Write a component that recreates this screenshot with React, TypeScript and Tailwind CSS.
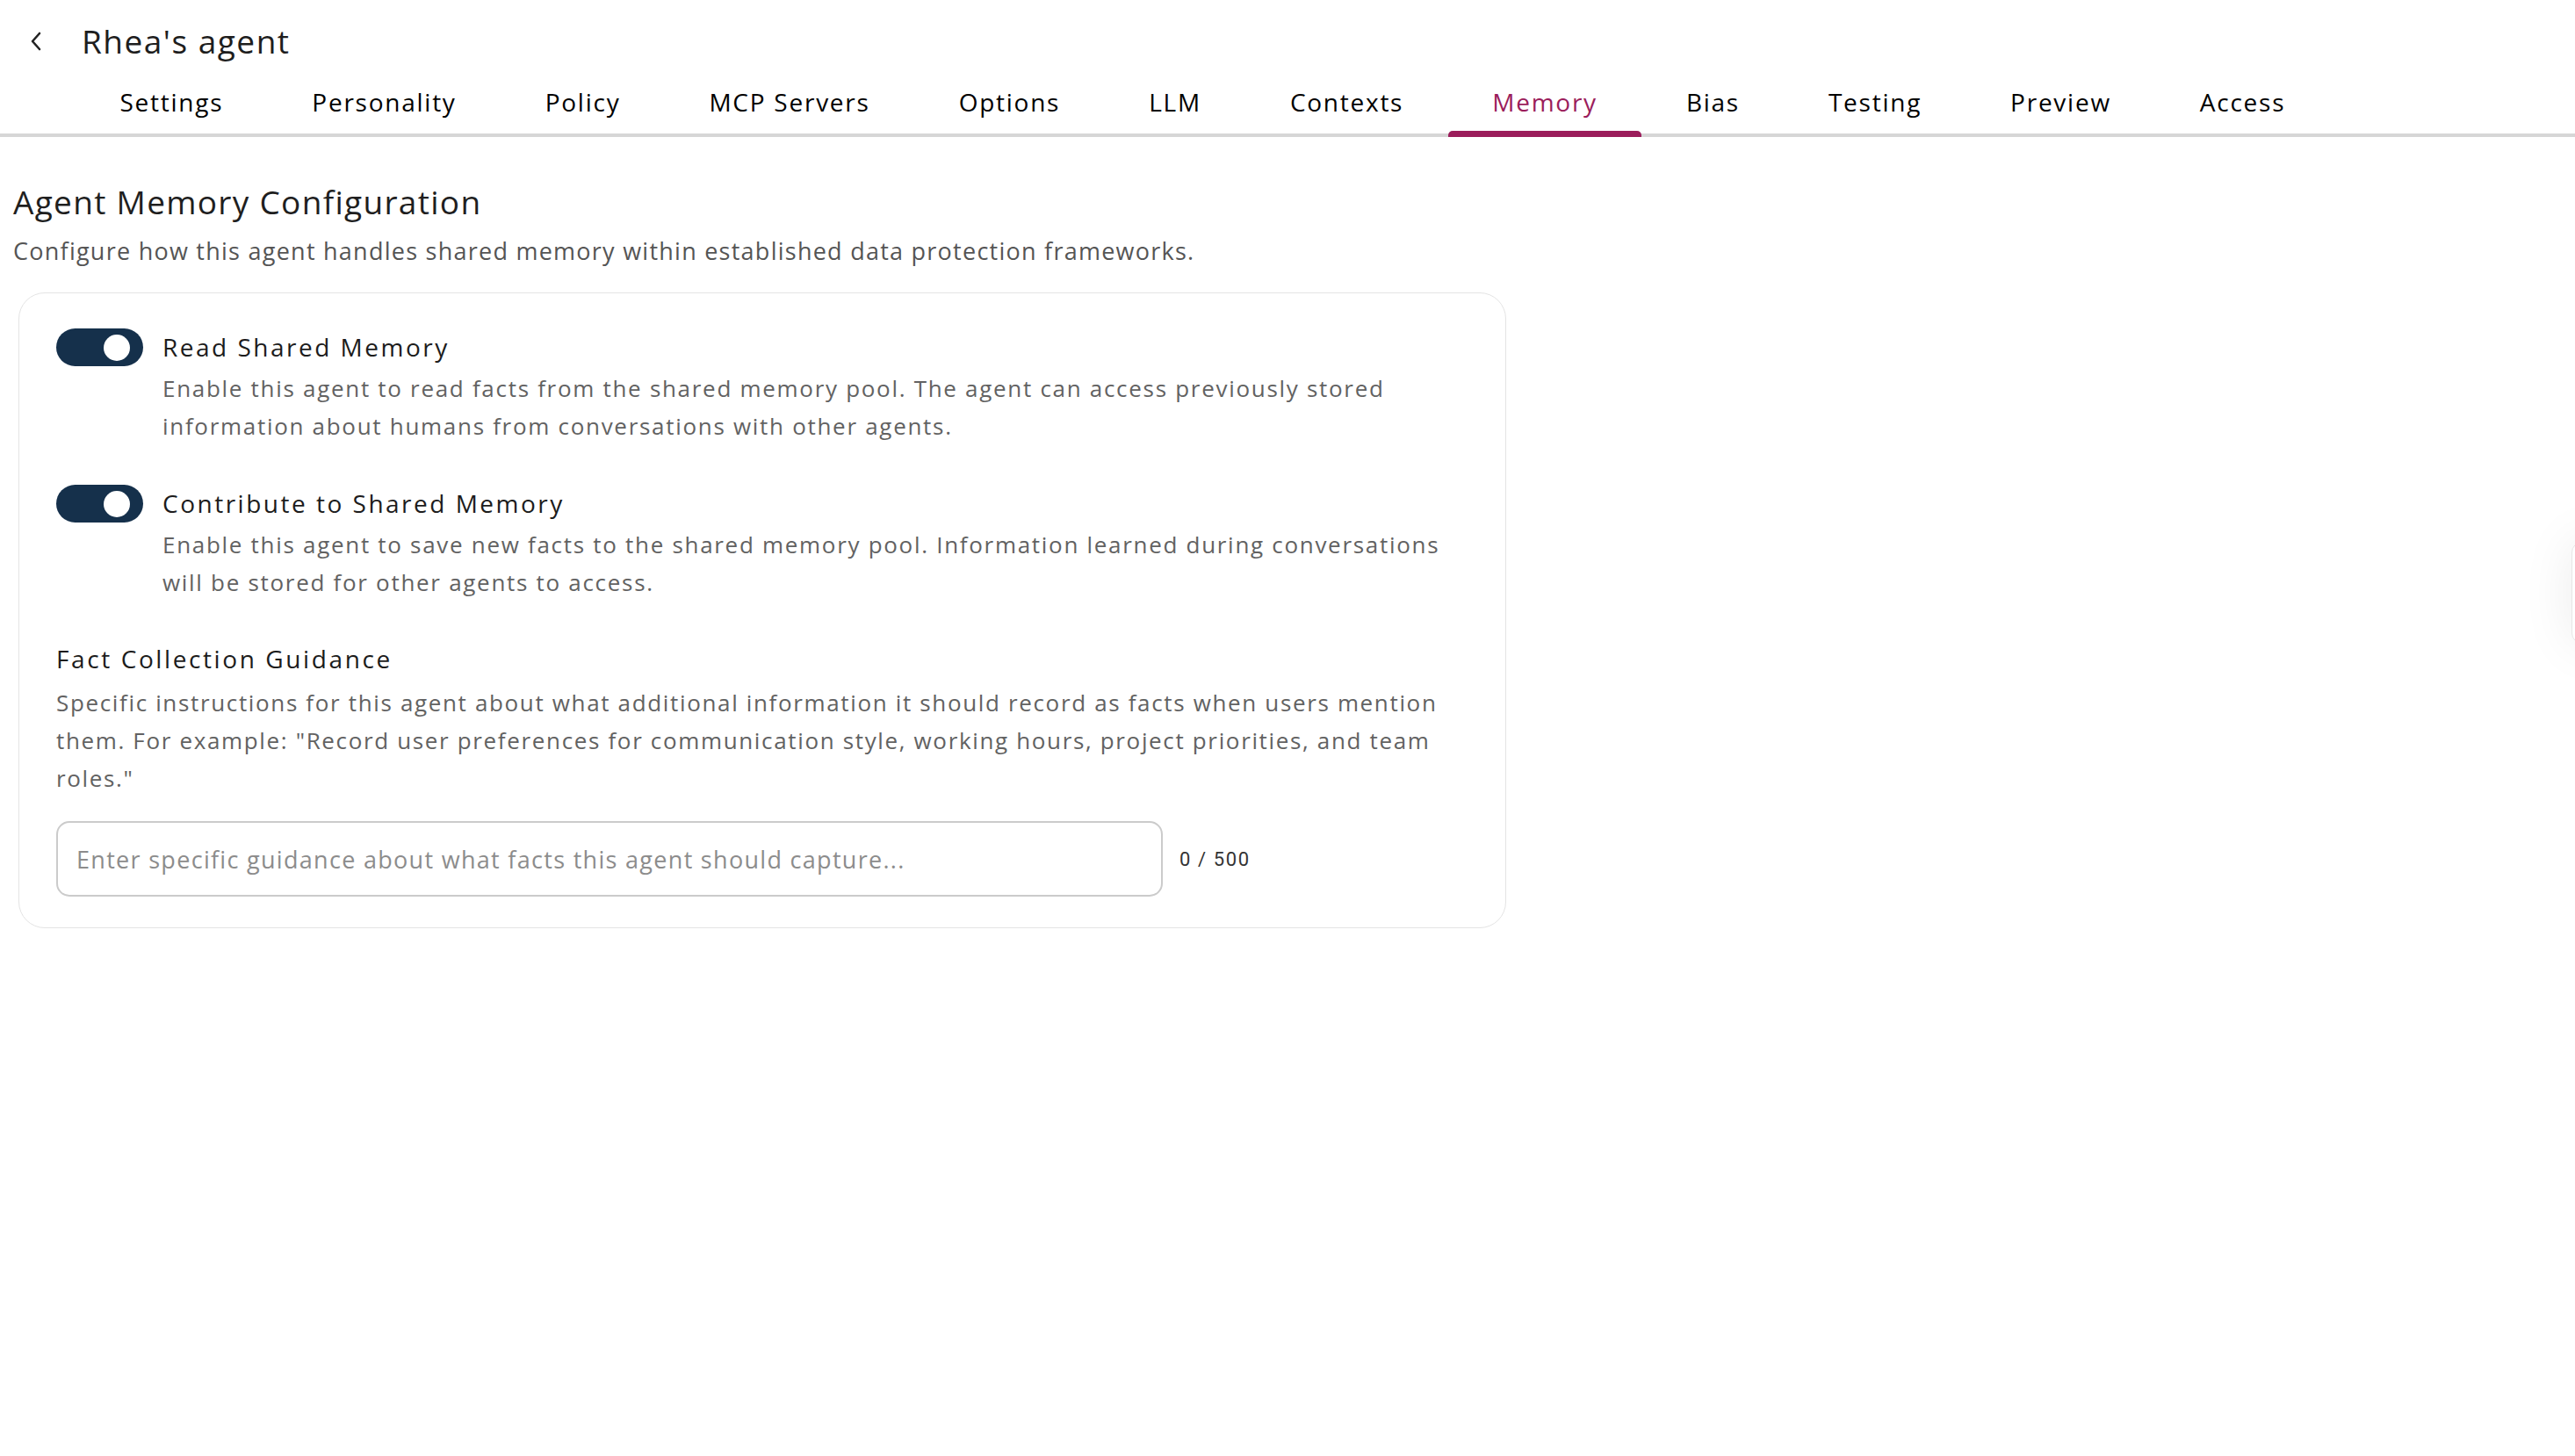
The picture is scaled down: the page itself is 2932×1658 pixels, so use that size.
import React, { useState } from "react";

const tabs = [
    "Settings", "Personality", "Policy", "MCP Servers", "Options", "LLM",
    "Contexts", "Memory", "Bias", "Testing", "Preview", "Access",
];

function Toggle({ on, onChange }: { on: boolean; onChange: () => void }) {
    return (
        <button
            onClick={onChange}
            className={`relative shrink-0 w-[99px] h-[43px] rounded-full transition-colors ${on ? "bg-[#15304b]" : "bg-[#c7c7c7]"}`}
            aria-pressed={on}
        >
            <span
                className={`absolute top-[6.5px] w-[30px] h-[30px] rounded-full bg-white transition-all ${on ? "left-[54px]" : "left-[15px]"}`}
            />
        </button>
    );
}

function ToggleRow({ label, desc, on, onChange }: { label: string; desc: string; on: boolean; onChange: () => void }) {
    return (
        <div className="flex gap-[22px]">
            <Toggle on={on} onChange={onChange} />
            <div className="flex-1">
                <div className="text-[28px] leading-[43px] tracking-[2.5px] font-medium text-[#1c1c1c]">{label}</div>
                <p className="mt-[4px] text-[26px] leading-[43px] tracking-[1.7px] text-[#626262]">{desc}</p>
            </div>
        </div>
    );
}

export default function App() {
    const [active, setActive] = useState("Memory");
    const [readShared, setReadShared] = useState(true);
    const [contribute, setContribute] = useState(true);
    const [guidance, setGuidance] = useState("");

    return (
        <div className="relative min-h-screen bg-white font-['Open_Sans',sans-serif] overflow-hidden">
            {/* Header */}
            <div className="flex items-center h-[94px]">
                <button className="ml-[21px] w-[40px] h-[40px] flex items-center justify-center text-[#222]" aria-label="Back">
                    <svg width="16" height="24" viewBox="0 0 16 24" fill="none">
                        <path d="M12 3 L4 12 L12 21" stroke="currentColor" strokeWidth="2.6" strokeLinecap="round" strokeLinejoin="round" />
                    </svg>
                </button>
                <h1 className="ml-[32px] text-[37px] leading-[48px] tracking-[1.5px] text-[#1e1e1e]">Rhea's agent</h1>
            </div>

            {/* Tabs */}
            <nav className="flex pl-[86px] border-b-4 border-[#d6d6d6]">
                {tabs.map(t => (
                    <button
                        key={t}
                        onClick={() => setActive(t)}
                        className={`relative px-[50.5px] pt-[2px] pb-[16px] text-[28px] leading-[40px] tracking-[1.75px] font-medium ${active === t ? "text-[#9b1d5b]" : "text-black"}`}
                    >
                        {t}
                        {active === t && (
                            <span className="absolute left-0 right-0 -bottom-[4px] h-[7px] rounded-t-[5px] bg-[#9b1d5b]" />
                        )}
                    </button>
                ))}
            </nav>

            {/* Content */}
            <main className="px-[15px] pt-[50px]">
                <h2 className="text-[37px] leading-[48px] tracking-[1.3px] text-[#1f1f1f]">Agent Memory Configuration</h2>
                <p className="mt-[12px] text-[27px] leading-[40px] tracking-[1.25px] text-[#555]">
                    Configure how this agent handles shared memory within established data protection frameworks.
                </p>

                <div className="mt-[27px] ml-[6px] w-[1694px] border border-[#e4e4e4] rounded-[30px] pl-[42px] pr-[42px] pt-[40px] pb-[35px]">
                    <ToggleRow
                        label="Read Shared Memory"
                        desc="Enable this agent to read facts from the shared memory pool. The agent can access previously stored information about humans from conversations with other agents."
                        on={readShared}
                        onChange={() => setReadShared(v => !v)}
                    />
                    <div className="mt-[45px]">
                        <ToggleRow
                            label="Contribute to Shared Memory"
                            desc="Enable this agent to save new facts to the shared memory pool. Information learned during conversations will be stored for other agents to access."
                            on={contribute}
                            onChange={() => setContribute(v => !v)}
                        />
                    </div>

                    <div className="mt-[44px]">
                        <div className="text-[28px] leading-[43px] tracking-[2.6px] font-medium text-[#1c1c1c]">Fact Collection Guidance</div>
                        <p className="mt-[7px] text-[26px] leading-[43px] tracking-[1.65px] text-[#626262]">
                            Specific instructions for this agent about what additional information it should record as facts when users mention them. For example: "Record user preferences for communication style, working hours, project priorities, and team roles."
                        </p>
                        <div className="mt-[27px] flex items-center gap-[19px]">
                            <input
                                value={guidance}
                                maxLength={500}
                                onChange={e => setGuidance(e.target.value)}
                                placeholder="Enter specific guidance about what facts this agent should capture..."
                                className="w-[1260px] h-[86px] px-[21px] border-2 border-[#cbcbcb] rounded-[15px] text-[27px] tracking-[1.3px] text-[#333] placeholder:text-[#8c8c8c] outline-none"
                            />
                            <span className="font-['Roboto',sans-serif] text-[22px] tracking-[1.6px] text-[#333]">{guidance.length} / 500</span>
                        </div>
                    </div>
                </div>
            </main>

            {/* Side handle peeking from the right edge */}
            <div className="absolute top-[617px] -right-[60px] w-[64px] h-[116px] rounded-[12px] bg-white border border-[#e6e6e6] shadow-[0_0_60px_rgba(0,0,0,0.08)]" />
        </div>
    );
}
